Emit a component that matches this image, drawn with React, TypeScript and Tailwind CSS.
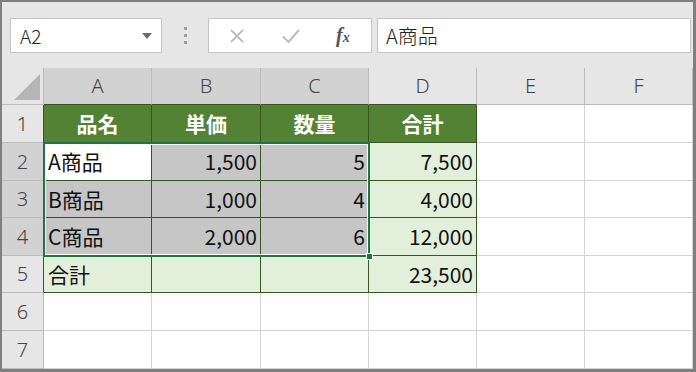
import React from "react";

const COLS = ["A", "B", "C", "D", "E", "F"];
const COL_W = [108, 109, 108, 108, 108, 108];
const ROW_H = [38, 38, 37, 38, 37, 38, 38];

type Cell = { t: string; kind: "head" | "sel" | "active" | "green" | "empty"; right?: boolean };

const data: Cell[][] = [
  [
    { t: "品名", kind: "head" },
    { t: "単価", kind: "head" },
    { t: "数量", kind: "head" },
    { t: "合計", kind: "head" },
  ],
  [
    { t: "A商品", kind: "active" },
    { t: "1,500", kind: "sel", right: true },
    { t: "5", kind: "sel", right: true },
    { t: "7,500", kind: "green", right: true },
  ],
  [
    { t: "B商品", kind: "sel" },
    { t: "1,000", kind: "sel", right: true },
    { t: "4", kind: "sel", right: true },
    { t: "4,000", kind: "green", right: true },
  ],
  [
    { t: "C商品", kind: "sel" },
    { t: "2,000", kind: "sel", right: true },
    { t: "6", kind: "sel", right: true },
    { t: "12,000", kind: "green", right: true },
  ],
  [
    { t: "合計", kind: "green" },
    { t: "", kind: "green" },
    { t: "", kind: "green" },
    { t: "23,500", kind: "green", right: true },
  ],
];

const font = { fontFamily: '"Noto Sans CJK JP", "Noto Sans", sans-serif' };

function DataCell({ r, c }: { r: number; c: number }) {
  const inTable = r < 5 && c < 4;
  if (!inTable) {
    return <div className="border-r border-b border-[#d4d4d4] bg-white" />;
  }
  const cell = data[r][c];
  const bg =
    cell.kind === "head"
      ? "bg-[#548235] text-white font-bold justify-center"
      : cell.kind === "sel"
      ? "bg-[#c6c6c6] text-[#111]"
      : cell.kind === "active"
      ? "bg-white text-[#111]"
      : "bg-[#e2efda] text-[#111]";
  const align = cell.kind === "head" ? "" : cell.right ? "justify-end pr-[3px]" : "justify-start pl-[4px]";
  return (
    <div className={`flex items-center border-r border-b border-[#375623] text-[21px] leading-none ${bg} ${align}`}>
      <span className="whitespace-nowrap">{cell.t}</span>
    </div>
  );
}

export default function App() {
  return (
    <div
      className="w-[696px] h-[372px] overflow-hidden border-t-2 border-l-2 border-r-[3px] border-b-[3px] border-[#7f7f7f] bg-[#e6e6e6] flex flex-col"
      style={font}
    >
      {/* Toolbar */}
      <div className="h-[66px] shrink-0 flex items-start pt-[16px]">
        <div className="ml-[8px] w-[152px] h-[35px] bg-white border border-[#c6c6c6] flex items-center justify-between pl-[9px] pr-[9px]">
          <span className="text-[19px] font-light text-[#222] leading-none">A2</span>
          <svg width="10" height="6" viewBox="0 0 10 6">
            <path d="M0 0 L10 0 L5 6 Z" fill="#6a6a6a" />
          </svg>
        </div>
        <div className="w-[46px] h-[35px] flex flex-col items-center justify-center gap-[4px]">
          <div className="w-[3px] h-[3px] bg-[#9e9e9e]" />
          <div className="w-[3px] h-[3px] bg-[#9e9e9e]" />
          <div className="w-[3px] h-[3px] bg-[#9e9e9e]" />
        </div>
        <div className="w-[164px] h-[35px] bg-white border border-[#c6c6c6] relative">
          <svg className="absolute left-[20px] top-[9px]" width="16" height="16" viewBox="0 0 16 16">
            <path d="M2 2 L14 14 M14 2 L2 14" stroke="#bdbdbd" strokeWidth="1.8" fill="none" />
          </svg>
          <svg className="absolute left-[72px] top-[9px]" width="20" height="16" viewBox="0 0 20 16">
            <path d="M2 8.5 L7.5 14 L18 2" stroke="#bdbdbd" strokeWidth="2" fill="none" />
          </svg>
          <span
            className="absolute left-[127px] top-[6px] text-[#555] italic font-bold leading-none"
            style={{ fontFamily: '"Liberation Serif", serif' }}
          >
            <span className="text-[20px]">f</span>
            <span className="text-[14px]">x</span>
          </span>
        </div>
        <div className="ml-[5px] mr-[2px] flex-1 h-[35px] bg-white border border-[#c6c6c6] flex items-center pl-[8px]">
          <span className="text-[20px] font-light text-[#222] leading-none">A商品</span>
        </div>
      </div>

      {/* Sheet */}
      <div className="relative flex-1">
        <div
          className="grid"
          style={{
            gridTemplateColumns: `42px ${COL_W.map((w) => w + "px").join(" ")}`,
            gridTemplateRows: `37px ${ROW_H.map((h) => h + "px").join(" ")}`,
          }}
        >
          {/* corner */}
          <div className="bg-[#e6e6e6] border-r border-b border-[#bcbcbc] relative">
            <svg className="absolute right-[3px] bottom-[4px]" width="26" height="26" viewBox="0 0 26 26">
              <path d="M26 0 L26 26 L0 26 Z" fill="#b6b6b6" />
            </svg>
          </div>
          {COLS.map((c, i) => (
            <div
              key={c}
              className={`flex items-center justify-center text-[20px] text-[#444] border-r border-[#bcbcbc] ${
                i < 3 ? "bg-[#d2d2d2]" : "bg-[#e6e6e6]"
              } ${i < 4 ? "border-b border-b-[#375623]" : "border-b border-b-[#bcbcbc]"}`}
              style={{ fontFamily: '"Noto Sans", sans-serif', fontWeight: 300 }}
            >
              {c}
            </div>
          ))}
          {ROW_H.map((_, r) => (
            <React.Fragment key={r}>
              <div
                className={`flex items-center justify-center text-[20px] text-[#444] border-b border-[#bcbcbc] border-r ${
                  r >= 1 && r <= 3 ? "bg-[#d2d2d2]" : "bg-[#e6e6e6]"
                } ${r < 5 ? "border-r-[#375623]" : "border-r-[#bcbcbc]"}`}
                style={{ fontFamily: '"Noto Sans", sans-serif', fontWeight: 300 }}
              >
                {r + 1}
              </div>
              {COLS.map((_, c) => (
                <DataCell key={c} r={r} c={c} />
              ))}
            </React.Fragment>
          ))}
        </div>

        {/* selection */}
        <div
          className="absolute left-[41px] top-[74px] w-[327px] h-[115px] border-2 border-[#217346] pointer-events-none"
          style={{ boxShadow: "inset 0 0 0 1px #ffffff" }}
        />
        <div className="absolute left-[364px] top-[185px] w-[7px] h-[7px] bg-[#217346] border border-white" />
      </div>
    </div>
  );
}
